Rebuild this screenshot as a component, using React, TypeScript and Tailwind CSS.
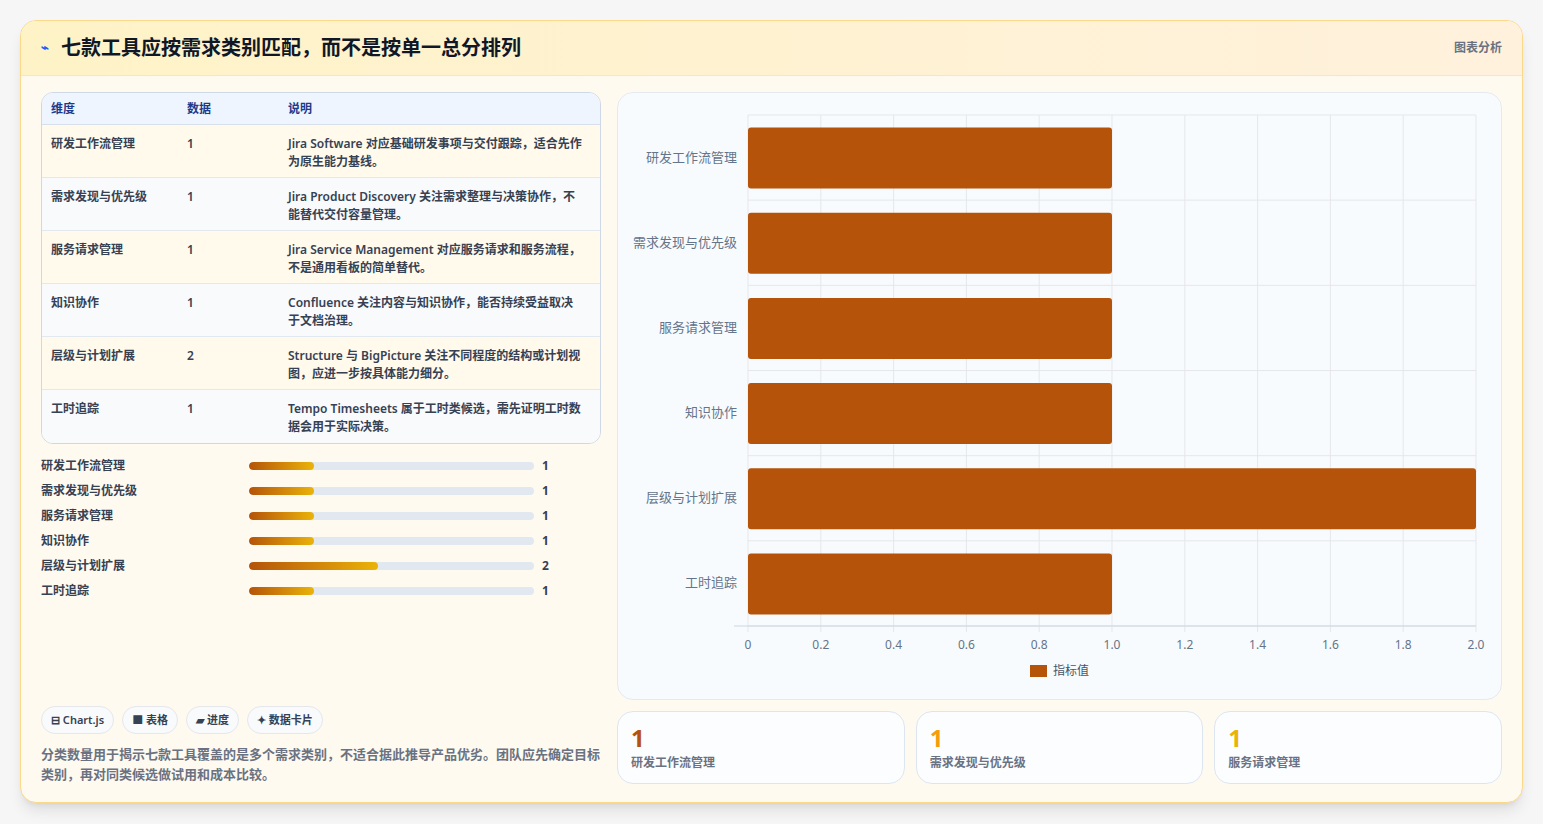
const rows = [
  { name: "研发工作流管理", value: 1, desc: "Jira Software 对应基础研发事项与交付跟踪，适合先作为原生能力基线。" },
  { name: "需求发现与优先级", value: 1, desc: "Jira Product Discovery 关注需求整理与决策协作，不能替代交付容量管理。" },
  { name: "服务请求管理", value: 1, desc: "Jira Service Management 对应服务请求和服务流程，不是通用看板的简单替代。" },
  { name: "知识协作", value: 1, desc: "Confluence 关注内容与知识协作，能否持续受益取决于文档治理。" },
  { name: "层级与计划扩展", value: 2, desc: "Structure 与 BigPicture 关注不同程度的结构或计划视图，应进一步按具体能力细分。" },
  { name: "工时追踪", value: 1, desc: "Tempo Timesheets 属于工时类候选，需先证明工时数据会用于实际决策。" },
];

function Chart() {
  const W = 883;
  const x0 = 130;
  const x1 = 858;
  const y0 = 22;
  const y1 = 533;
  const band = (y1 - y0) / 6;
  const sx = (v: number) => x0 + ((x1 - x0) * v) / 2;
  const ticks = [0, 0.2, 0.4, 0.6, 0.8, 1.0, 1.2, 1.4, 1.6, 1.8, 2.0];
  return (
    <svg width={W} height={607} className="block">
      {ticks.map((t) => (
        <line key={t} x1={sx(t)} x2={sx(t)} y1={y0} y2={y1 + 6} stroke="#e5e7eb" />
      ))}
      {[0, 1, 2, 3, 4, 5, 6].map((i) => (
        <line key={i} x1={x0} x2={x1} y1={y0 + band * i} y2={y0 + band * i} stroke="#e5e7eb" />
      ))}
      <line x1={x0 - 14} x2={x1} y1={y1} y2={y1} stroke="#cbd5e1" />
      {rows.map((r, i) => {
        const cy = y0 + band * i + band / 2;
        return (
          <g key={r.name}>
            <rect x={x0} y={cy - 30} width={sx(r.value) - x0} height={61} rx={3} fill="#b45309" />
            <text x={x0 - 11} y={cy + 4} textAnchor="end" fontSize={13} fill="#64748b">
              {r.name}
            </text>
          </g>
        );
      })}
      {ticks.map((t) => (
        <text key={t} x={sx(t)} y={y1 + 23} textAnchor="middle" fontSize={12} fill="#64748b">
          {t === 0 ? "0" : t.toFixed(1)}
        </text>
      ))}
      <rect x={412} y={572} width={17} height={12} fill="#b45309" />
      <text x={435} y={582} fontSize={12} fill="#475569">指标值</text>
    </svg>
  );
}

export default function App() {
  return (
    <div
      className="min-h-screen bg-[#f6f6f6] p-5"
      style={{ fontFamily: '"Noto Sans", "Noto Sans CJK SC", sans-serif' }}
    >
      <div className="h-[783px] rounded-2xl border border-[#fcd98a] bg-[#fffaf0] shadow-lg overflow-hidden flex flex-col">
        {/* HEADER */}
        <div className="h-[56px] flex items-center justify-between px-5 bg-gradient-to-r from-[#fef3c7] to-[#fff1dc] border-b border-[#f5e6c8]">
          <h1 className="flex items-center gap-3 text-[20px] font-bold text-gray-900">
            <span className="text-[13px] text-blue-600">⌁</span>
            七款工具应按需求类别匹配，而不是按单一总分排列
          </h1>
          <span className="text-[12px] font-semibold text-gray-500">图表分析</span>
        </div>

        {/* BODY */}
        <div className="flex-1 flex gap-4 px-5 pt-4 pb-[18px]">
          {/* LEFT */}
          <div className="w-[565px] flex flex-col">
            <div className="rounded-xl border border-[#cfd8e6] overflow-hidden">
              <div className="grid grid-cols-[136px_101px_1fr] h-[32px] items-center px-[9px] bg-[#eef5ff] border-b border-[#d6dfea] text-[12px] font-semibold text-[#1e3a8a]">
                <span>维度</span>
                <span>数据</span>
                <span>说明</span>
              </div>
              {rows.map((r, i) => (
                <div
                  key={r.name}
                  className={
                    "grid grid-cols-[136px_101px_1fr] h-[53px] px-[9px] pt-[10px] text-[12px] font-semibold text-gray-700 leading-[18px] " +
                    (i % 2 === 0 ? "bg-[#fffaeb]" : "bg-[#f8fafc]") +
                    (i < rows.length - 1 ? " border-b border-[#e2e8f0]" : "")
                  }
                >
                  <span>{r.name}</span>
                  <span>{r.value}</span>
                  <span className="pr-2">{r.desc}</span>
                </div>
              ))}
            </div>

            <div className="mt-[12px] flex flex-col gap-[6px]">
              {rows.map((r) => (
                <div key={r.name} className="flex items-center h-[19px] text-[12px] font-semibold text-gray-700">
                  <span className="w-[208px]">{r.name}</span>
                  <div className="w-[285px] h-[8px] rounded-full bg-[#e2e8f0] overflow-hidden">
                    <div
                      className="h-full rounded-full bg-gradient-to-r from-[#b45309] to-[#eab308]"
                      style={{ width: `${r.value * 22.7}%` }}
                    />
                  </div>
                  <span className="ml-2 font-bold">{r.value}</span>
                </div>
              ))}
            </div>

            <div className="mt-auto">
              <div className="flex gap-2 text-[11px] font-semibold text-gray-700">
                {["⊟ Chart.js", "■ 表格", "▰ 进度", "✦ 数据卡片"].map((c) => (
                  <span key={c} className="h-[28px] px-[9px] flex items-center rounded-full border border-[#e5e7eb] bg-[#f8fafc]">
                    {c}
                  </span>
                ))}
              </div>
              <p className="mt-[10px] text-[13px] leading-[20px] font-semibold text-gray-500">
                分类数量用于揭示七款工具覆盖的是多个需求类别，不适合据此推导产品优劣。团队应先确定目标类别，再对同类候选做试用和成本比较。
              </p>
            </div>
          </div>

          {/* RIGHT */}
          <div className="flex-1 flex flex-col gap-[11px]">
            <div className="h-[608px] rounded-2xl border border-[#e5eaf1] bg-[#f8fbfd] overflow-hidden">
              <Chart />
            </div>
            <div className="grid grid-cols-3 gap-[11px]">
              {[
                { v: "1", l: "研发工作流管理", c: "text-[#b45309]" },
                { v: "1", l: "需求发现与优先级", c: "text-[#f59e0b]" },
                { v: "1", l: "服务请求管理", c: "text-[#eab308]" },
              ].map((s) => (
                <div key={s.l} className="h-[73px] rounded-2xl border border-[#dde6f0] bg-[#fbfdff] px-[13px] pt-[10px]">
                  <div className={"text-[24px] font-bold leading-[32px] " + s.c}>{s.v}</div>
                  <div className="text-[12px] font-semibold text-gray-500">{s.l}</div>
                </div>
              ))}
            </div>
          </div>
        </div>
      </div>
    </div>
  );
}
